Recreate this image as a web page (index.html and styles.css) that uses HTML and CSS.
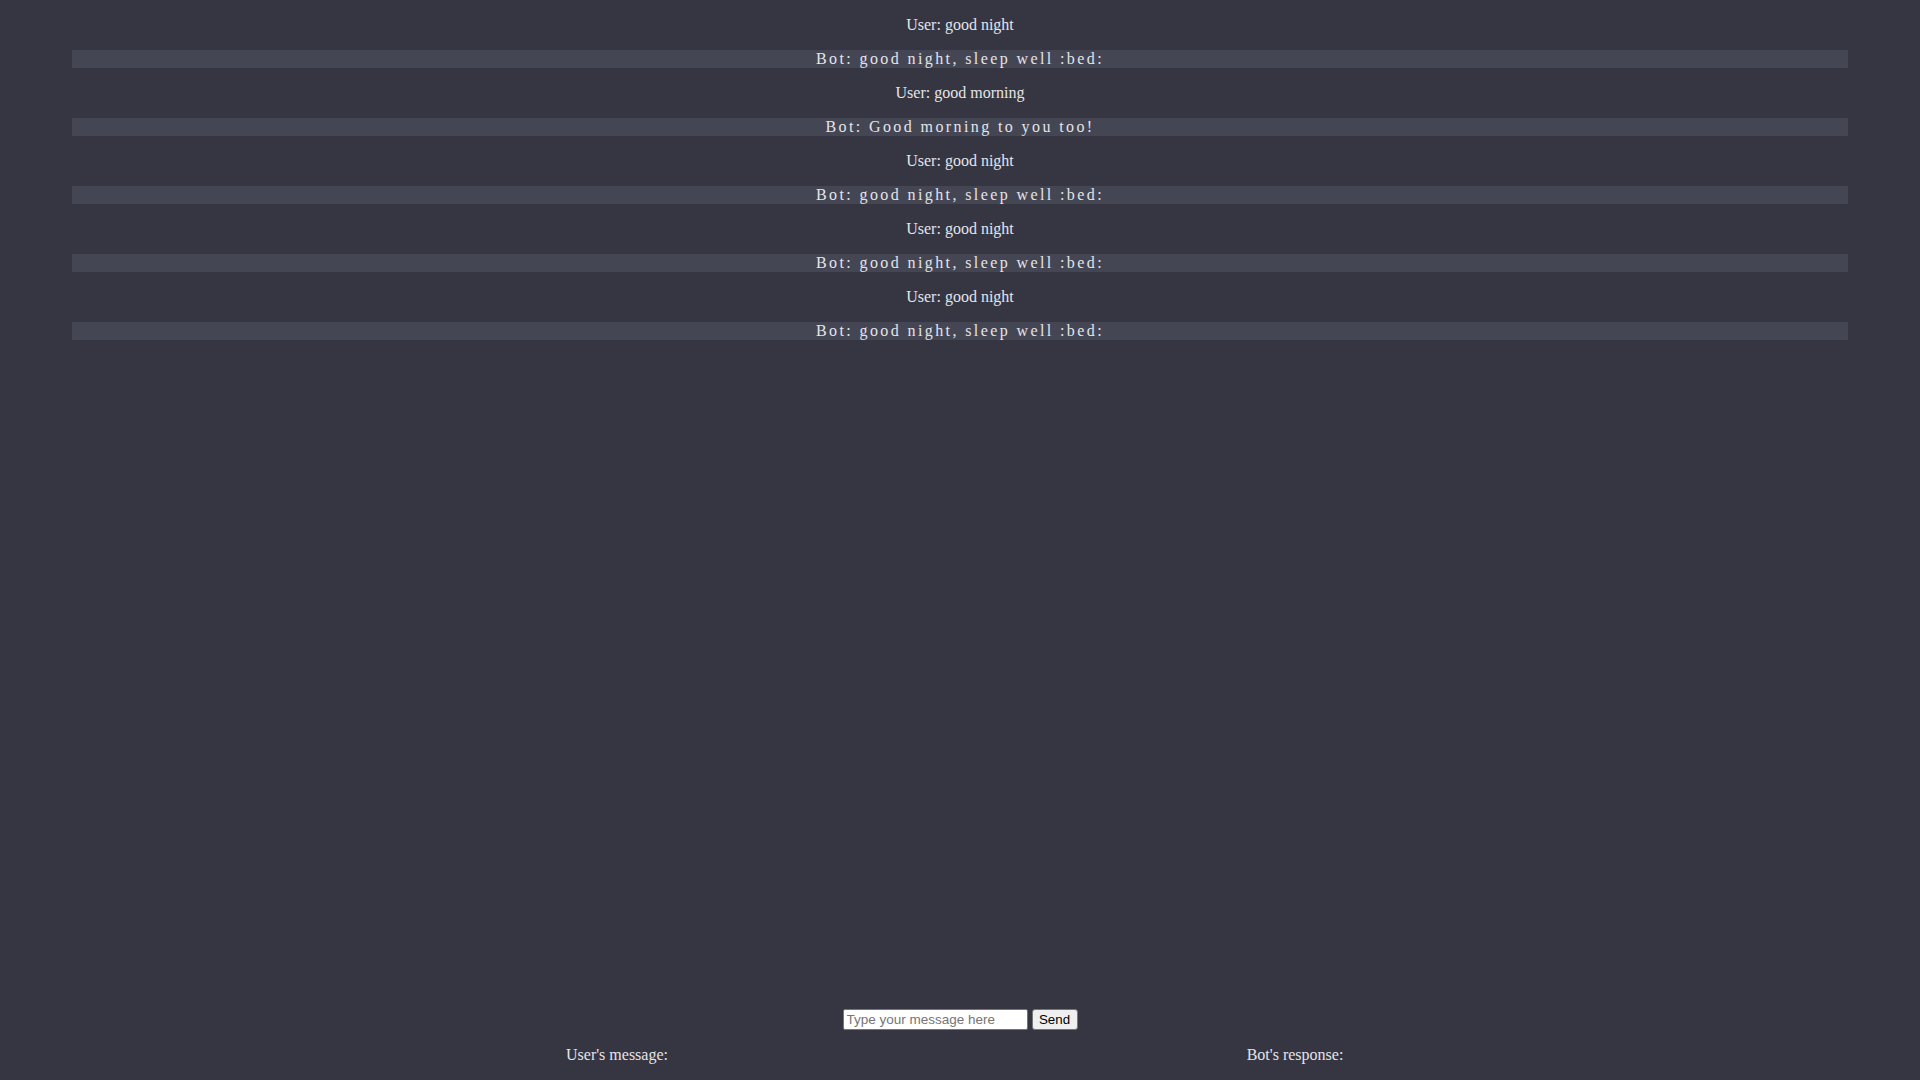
FILE: index.html
```html
<!DOCTYPE html>
<html lang="en">
<head>
<meta charset="utf-8">
<title>Chatbot</title>
<link rel="stylesheet" href="styles.css">
</head>
<body>
<div class="chat">
  <p class="msg user">User: good night</p>
  <p class="msg bot">Bot: good night, sleep well :bed:</p>
  <p class="msg user">User: good morning</p>
  <p class="msg bot">Bot: Good morning to you too!</p>
  <p class="msg user">User: good night</p>
  <p class="msg bot">Bot: good night, sleep well :bed:</p>
  <p class="msg user">User: good night</p>
  <p class="msg bot">Bot: good night, sleep well :bed:</p>
  <p class="msg user">User: good night</p>
  <p class="msg bot">Bot: good night, sleep well :bed:</p>
</div>
<form class="composer">
  <input class="field" type="text" placeholder="Type your message here">
  <button class="send" type="button">Send</button>
</form>
<div class="labels">
  <div class="label">User's message:</div>
  <div class="label">Bot's response:</div>
</div>
</body>
</html>
```
FILE: styles.css
```css
html, body {
  margin: 0;
  padding: 0;
}
body {
  background: #363642;
  color: #e4e4ea;
  font-family: "Liberation Serif", "Times New Roman", serif;
  font-size: 16px;
  line-height: 18px;
  height: 1080px;
  overflow: hidden;
}
.chat {
  height: 1009px;
  box-sizing: border-box;
  padding: 16px 72px 0;
  display: flex;
  flex-direction: column;
  gap: 16px;
}
.msg {
  margin: 0;
  text-align: center;
  height: 18px;
}
.bot {
  background: #454654;
  letter-spacing: 2.4px;
}
.composer {
  margin: 0;
  display: flex;
  justify-content: center;
  gap: 4px;
  height: 21px;
}
.field {
  width: 185px;
  height: 21px;
  box-sizing: border-box;
  border: 1px solid #767676;
  border-radius: 2px;
  padding: 1px 3px;
  background: #ffffff;
  font-family: "Liberation Sans", Arial, sans-serif;
  font-size: 13.5px;
  color: #000;
}
.field::placeholder {
  color: #757575;
}
.send {
  width: 46px;
  height: 21px;
  box-sizing: border-box;
  border: 1px solid #767676;
  border-radius: 3px;
  background: #efefef;
  padding: 1px 6px;
  font-family: "Liberation Sans", Arial, sans-serif;
  font-size: 13.33px;
  color: #000;
}
.labels {
  margin: 16px 0 0 278px;
  width: 1356px;
  display: grid;
  grid-template-columns: 1fr 1fr;
}
.label {
  text-align: center;
}
```
